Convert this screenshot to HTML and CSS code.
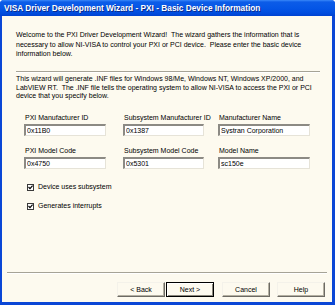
FILE: index.html
```html
<!DOCTYPE html>
<html>
<head>
<meta charset="utf-8">
<link rel="stylesheet" href="styles.css">
</head>
<body>
<div class="window">
  <div class="titlebar"><span class="title">VISA Driver Development Wizard - PXI - Basic Device Information</span></div>
  <div class="client">
    <div class="header">
      <p class="text">Welcome to the PXI Driver Development Wizard!&nbsp; The wizard gathers the information that is<br>necessary to allow NI-VISA to control your PXI or PCI device.&nbsp; Please enter the basic device<br>information below.</p>
    </div>
    <div class="sep top"></div>
    <div class="main">
      <p class="text intro">This wizard will generate .INF files for Windows 98/Me, Windows NT, Windows XP/2000, and<br>LabVIEW RT.&nbsp; The .INF file tells the operating system to allow NI-VISA to access the PXI or PCI<br>device that you specify below.</p>
      <div class="fields">
        <div class="field c1"><label class="lbl">PXI Manufacturer ID</label><input class="box" value="0x11B0"></div>
        <div class="field c2"><label class="lbl">Subsystem Manufacturer ID</label><input class="box" value="0x1387"></div>
        <div class="field c3"><label class="lbl">Manufacturer Name</label><input class="box" value="Systran Corporation"></div>
        <div class="field c1"><label class="lbl">PXI Model Code</label><input class="box" value="0x4750"></div>
        <div class="field c2"><label class="lbl">Subsystem Model Code</label><input class="box" value="0x5301"></div>
        <div class="field c3"><label class="lbl">Model Name</label><input class="box" value="sc150e"></div>
      </div>
      <div class="checks">
        <div class="check"><span class="cb"><svg width="5" height="5" viewBox="0 0 5 5"><path d="M0.5 2 L2 3.6 L4.6 0.6" fill="none" stroke="#000" stroke-width="1.2"/></svg></span><span>Device uses subsystem</span></div>
        <div class="check"><span class="cb"><svg width="5" height="5" viewBox="0 0 5 5"><path d="M0.5 2 L2 3.6 L4.6 0.6" fill="none" stroke="#000" stroke-width="1.2"/></svg></span><span>Generates interrupts</span></div>
      </div>
    </div>
    <div class="sep bottom"></div>
    <div class="buttons">
      <button class="btn back">&lt; Back</button>
      <button class="btn next">Next &gt;</button>
      <button class="btn cancel">Cancel</button>
      <button class="btn help">Help</button>
    </div>
  </div>
</div>
</body>
</html>
```
FILE: styles.css
```css
html, body {
  margin: 0;
  padding: 0;
  background: #ffffff;
}
.window {
  width: 335px;
  height: 305px;
  display: flex;
  flex-direction: column;
  box-sizing: border-box;
  border-radius: 4px 4px 0 0;
  overflow: hidden;
  background: #0a46d6;
  font-family: "Liberation Sans", Arial, sans-serif;
  color: #000;
}
.titlebar {
  height: 16px;
  flex: none;
  display: flex;
  align-items: center;
  padding-left: 4px;
  background: linear-gradient(to bottom, #3a88f8 0px, #0c5ce8 2px, #0556e6 8px, #004ddf 13px, #0042d0 16px);
}
.title {
  color: #fff;
  font-weight: bold;
  font-size: 8.3px;
  text-shadow: 1px 1px 0 #0a2a8a;
  white-space: nowrap;
}
.client {
  flex: 1;
  display: flex;
  flex-direction: column;
  margin: 0 3px 3px 2px;
  background: #fdfaef;
}
.text {
  margin: 0;
  font-size: 7px;
  line-height: 9.5px;
  white-space: nowrap;
}
.header {
  height: 55px;
  box-sizing: border-box;
  padding: 14px 0 0 14px;
}
.sep {
  height: 1px;
  background: #a6a396;
  border-bottom: 1px solid #ffffff;
}
.sep.top {
  margin-left: 14px;
  width: 304px;
}
.main {
  flex: 1;
}
.intro {
  line-height: 8.7px;
  padding: 2px 0 0 14px;
}
.fields {
  display: grid;
  grid-template-columns: 99px 95px 92px;
  row-gap: 10px;
  margin: 12px 0 0 22px;
}
.field {
  display: flex;
  flex-direction: column;
  gap: 2px;
}
.lbl {
  font-size: 7px;
  line-height: 9px;
  padding-left: 1px;
  white-space: nowrap;
}
.box {
  box-sizing: border-box;
  height: 12px;
  margin: 0;
  padding: 0 1px;
  font-family: "Liberation Sans", Arial, sans-serif;
  font-size: 7px;
  color: #000;
  background: #fff;
  border-style: solid;
  border-width: 2px 1px 1px 2px;
  border-color: #8c8a84 #e6e3d8 #e6e3d8 #8c8a84;
  outline: none;
}
.c1 .box { width: 82px; }
.c2 .box { width: 81px; }
.c3 .box { width: 92px; }
.checks {
  display: flex;
  flex-direction: column;
  gap: 9px;
  margin: 13px 0 0 25px;
}
.check {
  display: flex;
  align-items: center;
  gap: 4px;
  font-size: 7px;
  line-height: 10px;
  white-space: nowrap;
}
.cb {
  width: 7px;
  height: 7px;
  box-sizing: border-box;
  border: 1px solid #3a3a3a;
  background: #fff;
  display: flex;
  align-items: center;
  justify-content: center;
}
.cb svg { display: block; }
.sep.bottom {
  margin: 0 5px 0 5px;
}
.buttons {
  display: flex;
  justify-content: flex-end;
  padding: 8px 7px 5px 0;
}
.btn {
  width: 48px;
  height: 15px;
  box-sizing: border-box;
  margin: 0;
  padding: 0;
  font-family: "Liberation Sans", Arial, sans-serif;
  font-size: 7px;
  color: #000;
  background: #fdfaef;
  border: 1px solid;
  border-color: #f4f2ea #6c6a64 #6c6a64 #f4f2ea;
  box-shadow: inset -1px -1px 0 #b4b0a2;
}
.btn.next {
  margin-left: 1px;
  border-color: #000;
  box-shadow: inset 1px 1px 0 #fff, inset -1px -1px 0 #8a877c;
}
.btn.cancel { margin-left: 8px; }
.btn.help { margin-left: 7px; }
```
